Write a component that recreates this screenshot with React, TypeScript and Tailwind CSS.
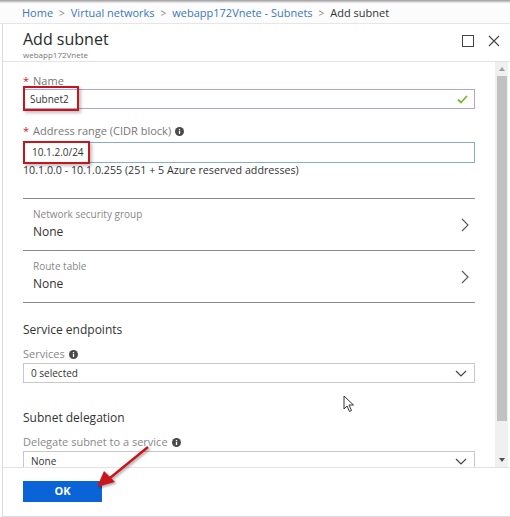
import React from "react";

const font = { fontFamily: '"Open Sans", "Noto Sans", Arial, sans-serif' };

function Info() {
  return (
    <svg width="9" height="9" viewBox="0 0 10 10" className="inline-block">
      <circle cx="5" cy="5" r="5" fill="#4a4a4a" />
      <rect x="4.3" y="4.2" width="1.4" height="3.6" fill="#fff" />
      <rect x="4.3" y="2.2" width="1.4" height="1.3" fill="#fff" />
    </svg>
  );
}

function ChevronRight() {
  return (
    <svg width="8" height="14" viewBox="0 0 8 14">
      <path d="M1 1 L7 7 L1 13" stroke="#555" strokeWidth="1.1" fill="none" />
    </svg>
  );
}

function ChevronDown() {
  return (
    <svg width="12" height="7" viewBox="0 0 12 7">
      <path d="M1 1 L6 6 L11 1" stroke="#444" strokeWidth="1.2" fill="none" />
    </svg>
  );
}

function Crumb({ children }: { children: React.ReactNode }) {
  return <span className="text-[#3b78c0]">{children}</span>;
}

function Sep() {
  return <span className="text-[#888] mx-[6px] text-[10px]">&gt;</span>;
}

export default function App() {
  return (
    <div
      className="w-[510px] h-[517px] bg-white relative overflow-hidden flex flex-col text-[#333]"
      style={font}
    >
      {/* top edge */}
      <div className="h-[3px] bg-gradient-to-b from-[#9a9a9a] to-[#f4f4f4]" />
      {/* breadcrumb */}
      <div className="h-[21px] flex items-center pl-[22px] text-[11px] border-b border-[#e6e6e6] bg-[#fcfcfc]">
        <Crumb>Home</Crumb>
        <Sep />
        <Crumb>Virtual networks</Crumb>
        <Sep />
        <Crumb>webapp172Vnete - Subnets</Crumb>
        <Sep />
        <span className="text-[#333]">Add subnet</span>
      </div>

      {/* blade */}
      <div className="flex-1 flex flex-col ml-[2px] border-l border-[#dcdcdc] border-b min-h-0">
        {/* header */}
        <div className="h-[38px] flex items-start pl-[20px] pr-[10px] border-b border-[#e3e3e3] shrink-0">
          <div className="flex-1 pt-[5px]">
            <div className="text-[16px] leading-[20px] text-[#2a2a2a]">Add subnet</div>
            <div className="text-[8px] leading-[10px] text-[#777] mt-[1px]">webapp172Vnete</div>
          </div>
          <div className="flex items-center gap-[14px] pt-[11px]">
            <div className="w-[12px] h-[12px] border border-[#444]" />
            <svg width="12" height="12" viewBox="0 0 12 12">
              <path d="M1 1 L11 11 M11 1 L1 11" stroke="#444" strokeWidth="1.1" />
            </svg>
          </div>
        </div>

        {/* content + scrollbar */}
        <div className="flex-1 flex min-h-0">
          <div className="flex-1 overflow-hidden pl-[20px] pr-[20px] relative">
            {/* Name */}
            <div className="mt-[12px] text-[11px] leading-[14px] text-[#777]">
              <span className="text-[#c4262e] mr-[4px]">*</span>Name
            </div>
            <div className="relative mt-[1px] h-[20px] border border-[#b8a3c9] flex items-center pl-[6px] pr-[6px] text-[10px] text-[#333]">
              <span className="flex-1">Subnet2</span>
              <svg width="11" height="9" viewBox="0 0 11 9">
                <path d="M1 4.5 L4 7.5 L10 1" stroke="#7cb82f" strokeWidth="1.8" fill="none" />
              </svg>
              <div className="absolute left-[-1px] top-[-4px] w-[56px] h-[25px] border-2 border-[#c8151b] shadow-[2px_2px_3px_rgba(0,0,0,0.25)]" />
            </div>

            {/* Address range */}
            <div className="mt-[15px] text-[11px] leading-[14px] text-[#777] flex items-center gap-[4px]">
              <span>
                <span className="text-[#c4262e] mr-[4px]">*</span>Address range (CIDR block)
              </span>
              <Info />
            </div>
            <div className="relative mt-[4px] h-[21px] border border-[#86aecb] flex items-center pl-[8px] text-[10px] text-[#333]">
              <span>10.1.2.0/24</span>
              <div className="absolute left-[-1px] top-[-2px] w-[67px] h-[23px] border-2 border-[#c8151b] shadow-[2px_2px_3px_rgba(0,0,0,0.25)]" />
            </div>
            <div className="mt-[0px] text-[10.7px] leading-[14px] text-[#333]">
              10.1.0.0 - 10.1.0.255 (251 + 5 Azure reserved addresses)
            </div>

            {/* pickers */}
            <div className="mt-[21px] border-t border-[#8a8a8a]">
              <div className="h-[52px] flex items-center pl-[10px] pr-[6px] border-b border-[#8a8a8a]">
                <div className="flex-1 -mt-[3px]">
                  <div className="text-[10px] leading-[14px] text-[#888]">Network security group</div>
                  <div className="text-[12px] leading-[16px] mt-[3px] text-[#333]">None</div>
                </div>
                <ChevronRight />
              </div>
              <div className="h-[52px] flex items-center pl-[10px] pr-[6px] border-b border-[#8a8a8a]">
                <div className="flex-1 -mt-[3px]">
                  <div className="text-[10px] leading-[14px] text-[#888]">Route table</div>
                  <div className="text-[12px] leading-[16px] mt-[3px] text-[#333]">None</div>
                </div>
                <ChevronRight />
              </div>
            </div>

            {/* Service endpoints */}
            <div className="mt-[19px] text-[12px] leading-[16px] text-[#333]">Service endpoints</div>
            <div className="mt-[9px] text-[11px] leading-[14px] text-[#888] flex items-center gap-[4px]">
              Services <Info />
            </div>
            <div className="mt-[2px] h-[20px] border border-[#c8c8c8] flex items-center pl-[7px] pr-[7px] text-[10px] text-[#333]">
              <span className="flex-1">0 selected</span>
              <ChevronDown />
            </div>

            {/* Subnet delegation */}
            <div className="mt-[27px] text-[12px] leading-[16px] text-[#333]">Subnet delegation</div>
            <div className="mt-[9px] text-[11px] leading-[14px] text-[#888] flex items-center gap-[4px]">
              Delegate subnet to a service <Info />
            </div>
            <div className="mt-[2px] h-[20px] border border-[#c8c8c8] flex items-center pl-[7px] pr-[7px] text-[10px] text-[#333]">
              <span className="flex-1">None</span>
              <ChevronDown />
            </div>
          </div>

          {/* scrollbar */}
          <div className="w-[13px] mr-[2px] bg-[#f0f0f0] flex flex-col items-center">
            <div className="h-[14px] flex items-center justify-center">
              <div className="w-0 h-0 border-l-[3px] border-r-[3px] border-b-[4px] border-l-transparent border-r-transparent border-b-[#a0a0a0]" />
            </div>
            <div className="w-[10px] h-[345px] bg-[#c1c1c1]" />
            <div className="flex-1" />
            <div className="h-[14px] flex items-center justify-center">
              <div className="w-0 h-0 border-l-[3px] border-r-[3px] border-t-[4px] border-l-transparent border-r-transparent border-t-[#505050]" />
            </div>
          </div>
        </div>

        {/* footer */}
        <div className="h-[49px] shrink-0 border-t border-[#e3e3e3] pl-[20px] pt-[13px]">
          <div className="w-[79px] h-[21px] bg-[#0a64d8] flex items-center justify-center text-white text-[11px] font-bold">
            OK
          </div>
        </div>
      </div>

      {/* annotation arrow */}
      <svg className="absolute left-0 top-0 pointer-events-none" width="510" height="517">
        <defs>
          <filter id="sh" x="-20%" y="-20%" width="140%" height="140%">
            <feDropShadow dx="1.5" dy="1.5" stdDeviation="1.2" floodColor="#000" floodOpacity="0.35" />
          </filter>
        </defs>
        <g filter="url(#sh)">
          <line x1="148" y1="447" x2="110" y2="478" stroke="#c8151b" strokeWidth="2.5" />
          <polygon points="97,487 104,471 115,482" fill="#c8151b" />
        </g>
      </svg>

      {/* mouse pointer */}
      <svg className="absolute left-[343px] top-[395px]" width="12" height="18" viewBox="0 0 12 18">
        <path d="M1 1 L1 14 L4 11 L6.5 16.5 L8.5 15.5 L6 10 L10.5 10 Z" fill="#fff" stroke="#333" strokeWidth="1" />
      </svg>
    </div>
  );
}
